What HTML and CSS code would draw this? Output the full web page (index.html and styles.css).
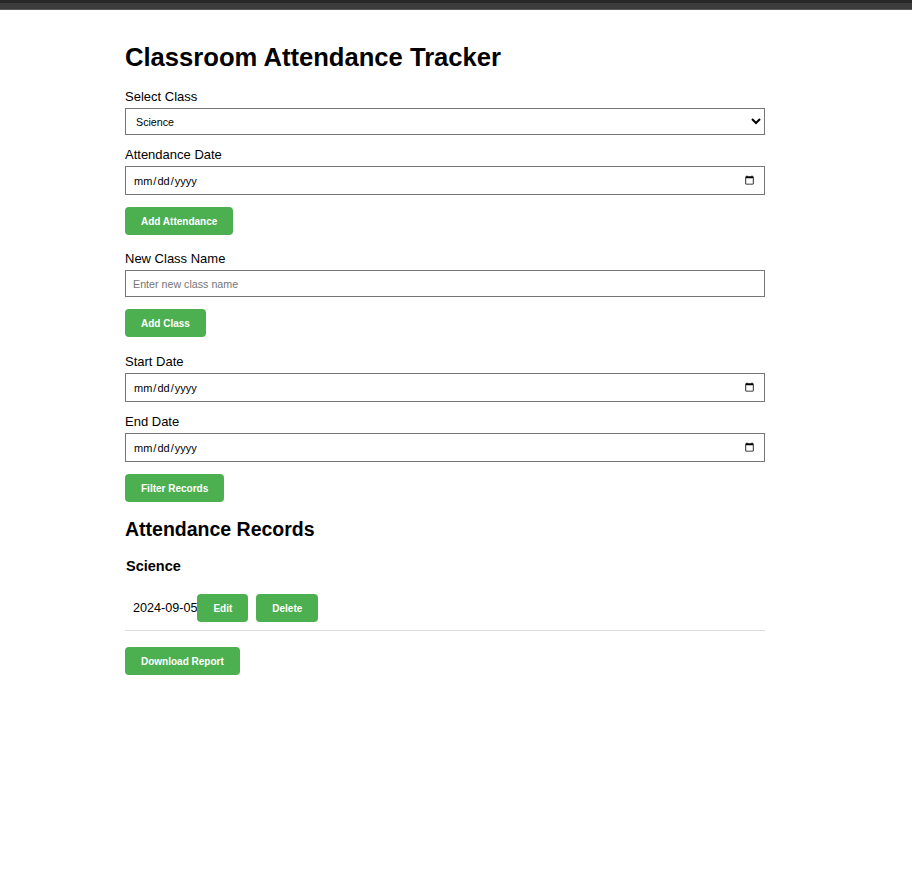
FILE: index.html
```html
<!DOCTYPE html>
<html lang="en">
<head>
<meta charset="utf-8">
<title>Classroom Attendance Tracker</title>
<link rel="stylesheet" href="styles.css">
</head>
<body>
<div class="topbar"></div>
<main class="container">
  <h1 class="title">Classroom Attendance Tracker</h1>

  <label class="label" for="classSelect">Select Class</label>
  <select id="classSelect" class="field select">
    <option>Science</option>
  </select>

  <label class="label" for="attDate">Attendance Date</label>
  <input id="attDate" class="field date" type="date">
  <button class="btn">Add Attendance</button>

  <label class="label" for="newClass">New Class Name</label>
  <input id="newClass" class="field text" type="text" placeholder="Enter new class name">
  <button class="btn btn-tall-gap">Add Class</button>

  <label class="label" for="startDate">Start Date</label>
  <input id="startDate" class="field date" type="date">

  <label class="label" for="endDate">End Date</label>
  <input id="endDate" class="field date" type="date">
  <button class="btn">Filter Records</button>

  <h2 class="section-title">Attendance Records</h2>
  <div class="records">
    <h3 class="class-name">Science</h3>
    <div class="record">
      <span class="record-date">2024-09-05</span>
      <button class="btn btn-inline">Edit</button>
      <button class="btn btn-inline">Delete</button>
    </div>
  </div>
  <button class="btn">Download Report</button>
</main>
</body>
</html>
```

FILE: styles.css
```css
html, body {
  margin: 0;
  padding: 0;
  background: #fff;
}
body {
  font-family: "Liberation Sans", Arial, sans-serif;
  color: #000;
}
.topbar {
  height: 10px;
  background: linear-gradient(#272727 0, #272727 3px, #3c3c3c 3px, #3c3c3c 9px, #5a5a5a 9px);
}
.container {
  width: 640px;
  margin-left: 125px;
  padding-top: 32px;
}
.title {
  font-size: 25.6px;
  font-weight: bold;
  margin: 0 0 17px;
  line-height: 30px;
}
.label {
  display: block;
  font-size: 13px;
  line-height: 15px;
  margin-bottom: 4px;
}
.field {
  display: block;
  box-sizing: border-box;
  width: 100%;
  margin: 0 0 12px;
  border: 1px solid #767676;
  border-radius: 0;
  background: #fff;
  font-family: "Liberation Sans", Arial, sans-serif;
  color: #000;
}
.select {
  height: 27px;
  font-size: 10.7px;
  padding: 0 6px;
}
.date {
  height: 29px;
  font-size: 11px;
  padding: 0 7px;
}
.text {
  height: 27px;
  font-size: 10.7px;
  padding: 0 7px;
}
.text::placeholder {
  color: #757575;
}
.btn {
  display: block;
  background: #4caf50;
  color: #fff;
  border: none;
  border-radius: 4px;
  font-family: "Liberation Sans", Arial, sans-serif;
  font-size: 10px;
  font-weight: bold;
  height: 28px;
  padding: 0 16px;
  margin: 0 0 16px;
  cursor: pointer;
}
.btn-tall-gap {
  margin-bottom: 17px;
}
.section-title {
  font-size: 19.5px;
  font-weight: bold;
  margin: -1px 0 0;
  line-height: 24px;
}
.class-name {
  font-size: 14.5px;
  font-weight: bold;
  margin: 16px 0 0 1px;
  line-height: 18px;
}
.record {
  display: flex;
  align-items: center;
  padding: 19px 0 8px 8px;
  border-bottom: 1px solid #ddd;
  margin-bottom: 16px;
}
.record-date {
  font-size: 12.6px;
}
.btn-inline {
  margin: 0 8px 0 0;
}
```
